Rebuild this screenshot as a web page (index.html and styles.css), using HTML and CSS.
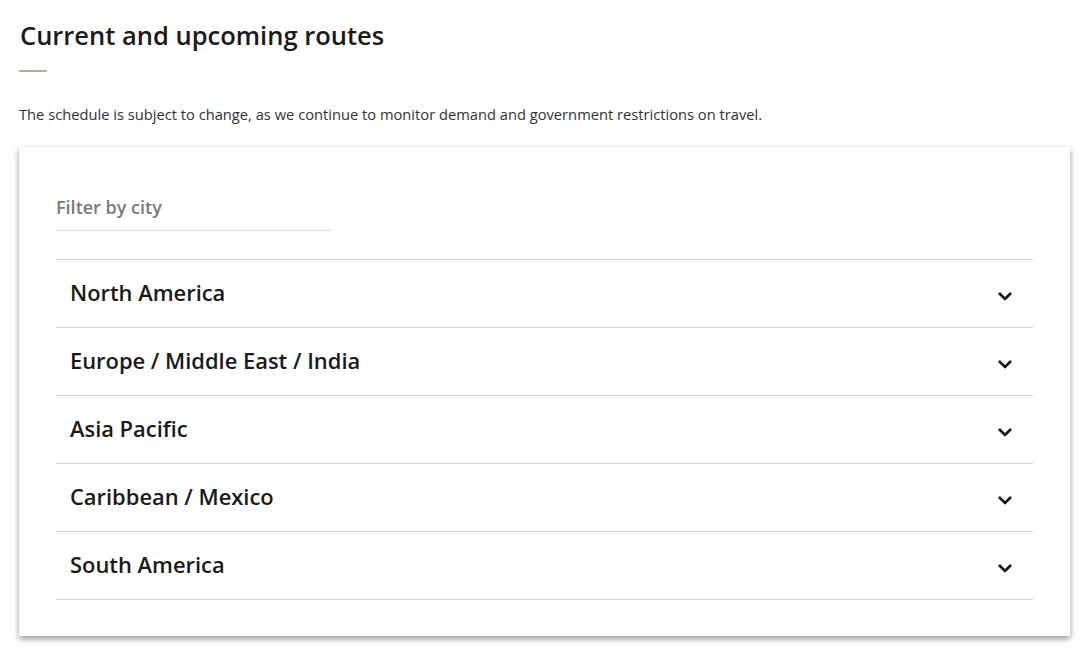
FILE: index.html
```html
<!DOCTYPE html>
<html lang="en">
  <head>
    <meta charset="utf-8" />
    <meta name="viewport" content="width=device-width, initial-scale=1.0" />
    <title>Current and upcoming routes</title>
    <link rel="stylesheet" href="styles.css">
  </head>
  <body>
    <div class="content">
      <h1 class="title">Current and upcoming routes</h1>
      <div class="accent-line"></div>
      <p class="intro">The schedule is subject to change, as we continue to monitor demand and government restrictions on travel.</p>
      <div class="routes-card">
        <div class="filter">
          <input type="text" class="filter-input" placeholder="Filter by city" />
        </div>
        <div class="accordion">
          <div class="accordion-row">
            <span class="region">North America</span>
            <svg class="chevron" viewBox="0 0 16 10" width="16" height="10"><path d="M2 2 L8 8 L14 2" /></svg>
          </div>
          <div class="accordion-row">
            <span class="region">Europe / Middle East / India</span>
            <svg class="chevron" viewBox="0 0 16 10" width="16" height="10"><path d="M2 2 L8 8 L14 2" /></svg>
          </div>
          <div class="accordion-row">
            <span class="region">Asia Pacific</span>
            <svg class="chevron" viewBox="0 0 16 10" width="16" height="10"><path d="M2 2 L8 8 L14 2" /></svg>
          </div>
          <div class="accordion-row">
            <span class="region">Caribbean / Mexico</span>
            <svg class="chevron" viewBox="0 0 16 10" width="16" height="10"><path d="M2 2 L8 8 L14 2" /></svg>
          </div>
          <div class="accordion-row">
            <span class="region">South America</span>
            <svg class="chevron" viewBox="0 0 16 10" width="16" height="10"><path d="M2 2 L8 8 L14 2" /></svg>
          </div>
        </div>
      </div>
    </div>
  </body>
</html>
```

FILE: styles.css
```css
:root {
  --main-text-color: #111111;
  --body-text-color: #333333;
  --accent-color: #c2ad92;
  --line-color: #d6d6d6;
  --muted-color: #7a7a7a;
}

* {
  box-sizing: border-box;
}

html,
body {
  background-color: #ffffff;
}

body {
  margin: 0;
  min-height: 659px;
  font-family: "Open Sans", "Noto Sans", sans-serif;
  color: var(--main-text-color);
}

.content {
  padding: 17px 10px 23px 19px;
}

.title {
  margin: 0 0 0 1px;
  font-size: 25.5px;
  font-weight: 600;
  line-height: 36px;
  color: #1a1a1a;
}

.accent-line {
  width: 28px;
  height: 2px;
  margin: 17px 0 0 0;
  background-color: var(--accent-color);
}

.intro {
  margin: 32px 0 0 0;
  font-size: 14.7px;
  line-height: 20px;
  color: var(--body-text-color);
}

.routes-card {
  margin-top: 23px;
  width: 1051px;
  background: #ffffff;
  box-shadow: 0 3px 6px rgba(0, 0, 0, 0.4);
  padding: 37px 37px 36px 37px;
}

.filter {
  width: 275px;
  border-bottom: 1px solid var(--line-color);
  padding: 10px 0 10px 0;
}

.filter-input {
  width: 100%;
  border: none;
  outline: none;
  padding: 0;
  font-family: inherit;
  font-size: 18px;
  font-weight: 600;
  line-height: 26px;
  color: var(--muted-color);
  background: none;
}

.filter-input::placeholder {
  color: var(--muted-color);
}

.accordion {
  margin-top: 28px;
  border-top: 1px solid var(--line-color);
}

.accordion-row {
  display: flex;
  align-items: center;
  justify-content: space-between;
  height: 68px;
  padding: 0 20px 0 14px;
  border-bottom: 1px solid var(--line-color);
}

.region {
  font-size: 21.9px;
  font-weight: 600;
  color: #1a1a1a;
  margin-top: -2px;
}

.chevron {
  fill: none;
  stroke: var(--main-text-color);
  stroke-width: 2.6;
  margin-top: 4px;
}
```
